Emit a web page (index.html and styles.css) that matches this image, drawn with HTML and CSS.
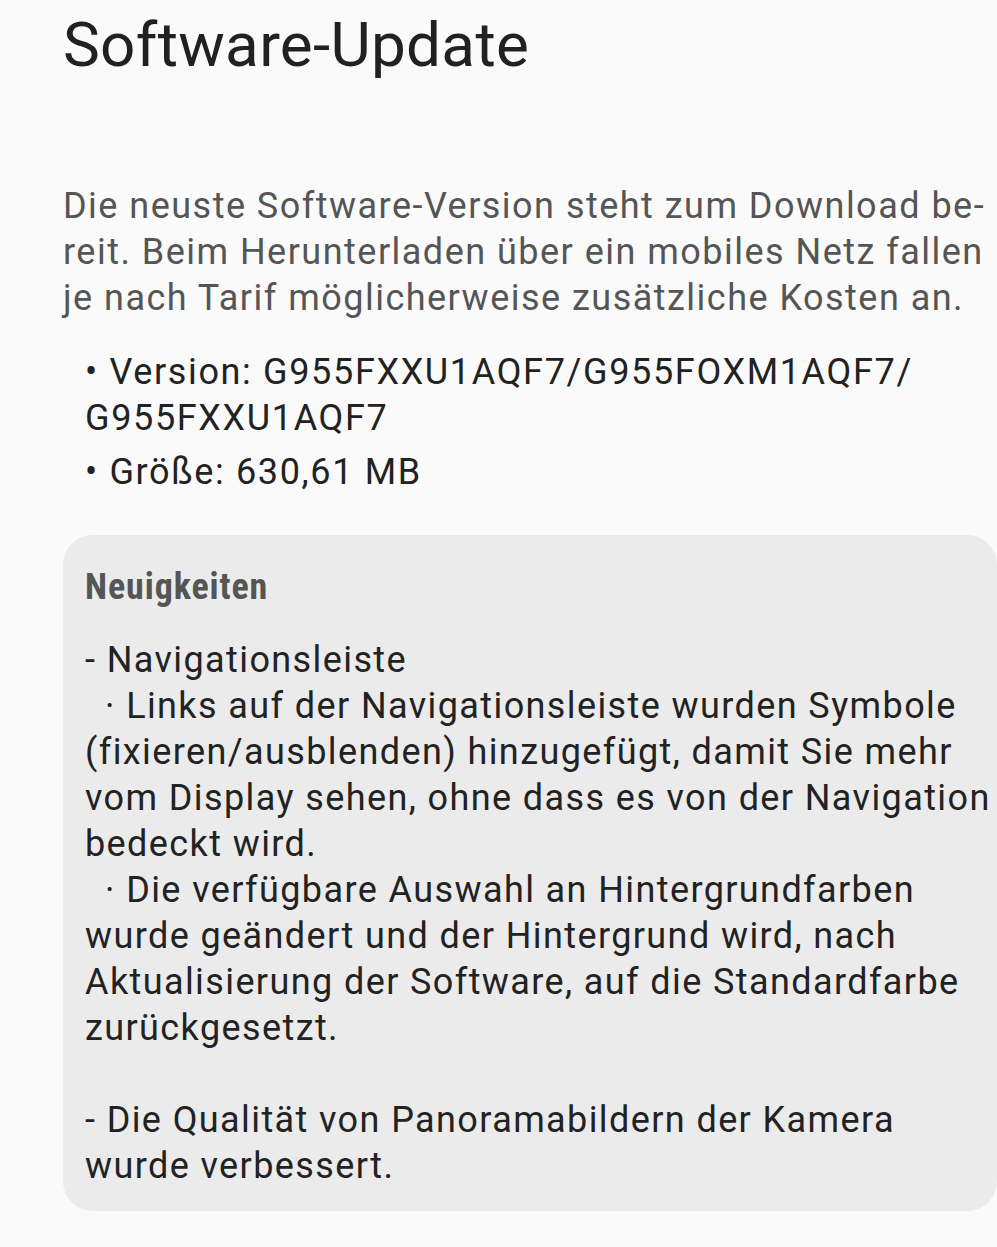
FILE: index.html
```html
<!DOCTYPE html>
<html lang="de">
<head>
<meta charset="utf-8">
<title>Software-Update</title>
<link rel="stylesheet" href="styles.css">
</head>
<body>
<main class="page">
  <h1 class="title">Software-Update</h1>
  <p class="intro">Die neuste Software-Version steht zum Download be-<br>reit. Beim Herunterladen über ein mobiles Netz fallen<br>je nach Tarif möglicherweise zusätzliche Kosten an.</p>
  <ul class="facts">
    <li>• Version: G955FXXU1AQF7/G955FOXM1AQF7/<br>G955FXXU1AQF7</li>
    <li>• Größe: 630,61 MB</li>
  </ul>
  <section class="card">
    <h2 class="card-title">Neuigkeiten</h2>
    <div class="notes">
      <p>- Navigationsleiste<br><span class="sub">· Links auf der Navigationsleiste wurden Symbole</span><br>(fixieren/ausblenden) hinzugefügt, damit Sie mehr<br>vom Display sehen, ohne dass es von der Navigation<br>bedeckt wird.<br><span class="sub">· Die verfügbare Auswahl an Hintergrundfarben</span><br>wurde geändert und der Hintergrund wird, nach<br>Aktualisierung der Software, auf die Standardfarbe<br>zurückgesetzt.</p>
      <p>- Die Qualität von Panoramabildern der Kamera<br>wurde verbessert.</p>
    </div>
  </section>
</main>
</body>
</html>
```

FILE: styles.css
```css
html, body {
  margin: 0;
  padding: 0;
  background: #fafafa;
}
body {
  font-family: Roboto, "Noto Sans", sans-serif;
  overflow: hidden;
}
.page {
  padding: 8px 0 0 63px;
}
.title {
  margin: 0;
  font-size: 62px;
  font-weight: 400;
  line-height: 74px;
  letter-spacing: 0.3px;
  color: #212121;
}
.intro {
  margin: 101px 0 0 0;
  font-size: 36px;
  line-height: 46px;
  letter-spacing: 1.48px;
  color: #555555;
  white-space: nowrap;
}
.facts {
  list-style: none;
  margin: 28px 0 0 22px;
  padding: 0;
  font-size: 36px;
  line-height: 46px;
  letter-spacing: 1.65px;
  color: #222222;
  white-space: nowrap;
}
.facts li + li {
  margin-top: 8px;
}
.card {
  box-sizing: border-box;
  margin-top: 40px;
  background: #ebebeb;
  border-radius: 30px;
  padding: 29px 0 22px 22px;
  width: 934px;
  overflow: hidden;
}
.card-title {
  margin: 0;
  font-family: "Roboto Condensed", Roboto, sans-serif;
  font-stretch: condensed;
  font-weight: 700;
  font-size: 36px;
  line-height: 46px;
  letter-spacing: 0.9px;
  color: #555555;
}
.notes {
  margin-top: 27px;
  font-size: 36px;
  line-height: 46px;
  letter-spacing: 1.4px;
  color: #222222;
  white-space: nowrap;
}
.notes p {
  margin: 0;
}
.notes p + p {
  margin-top: 46px;
}
.sub {
  padding-left: 20px;
}
```
